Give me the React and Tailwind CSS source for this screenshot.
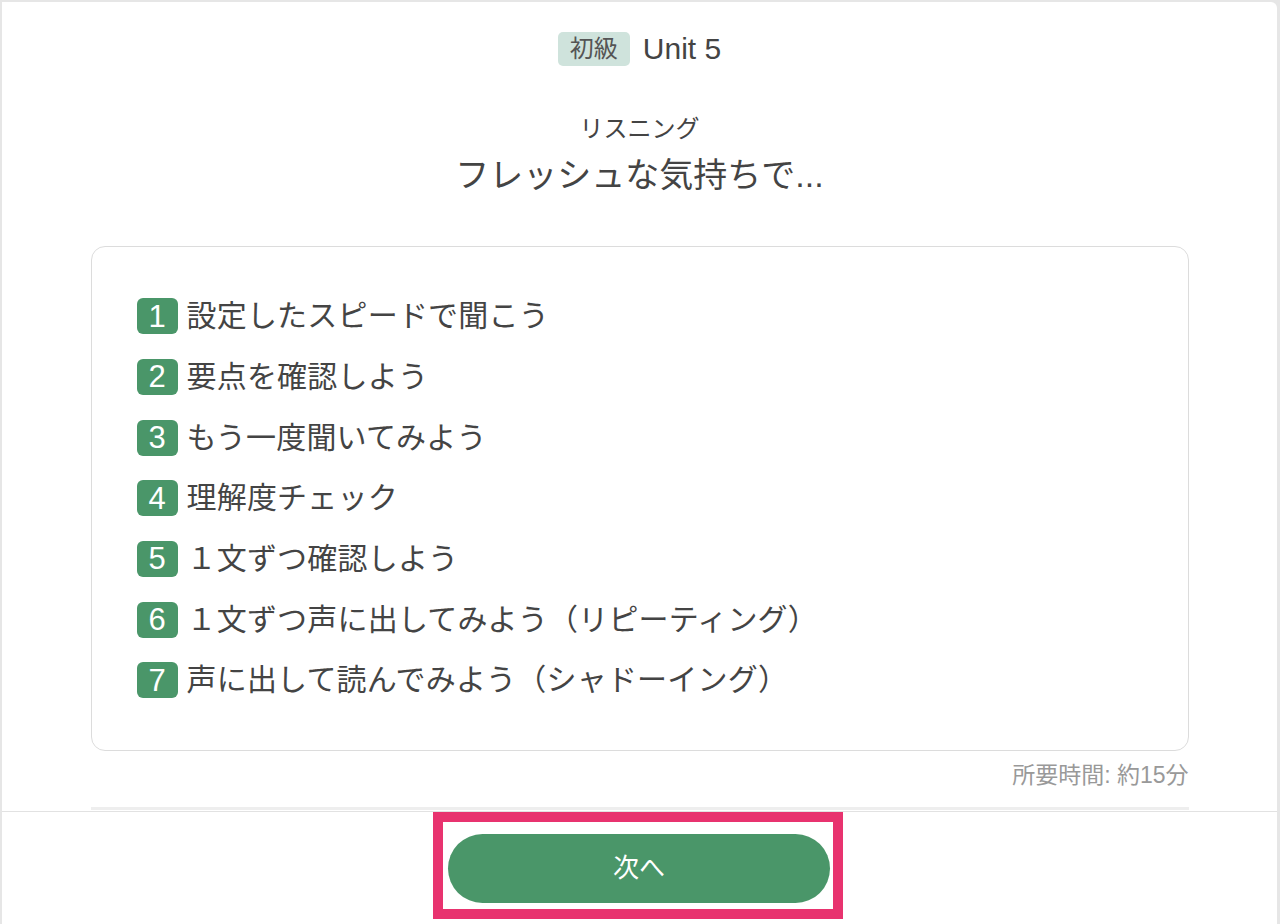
import React from 'react';

const FONT = '"Liberation Sans", "Noto Sans CJK JP", sans-serif';

const steps = [
  '設定したスピードで聞こう',
  '要点を確認しよう',
  'もう一度聞いてみよう',
  '理解度チェック',
  '１文ずつ確認しよう',
  '１文ずつ声に出してみよう（リピーティング）',
  '声に出して読んでみよう（シャドーイング）',
];

const StepRow = ({ num, label }) => (
  <li className="flex items-center h-[60.67px]">
    <span className="w-[41px] h-[36px] rounded-[6px] bg-[#4a9669] text-white text-[31px] flex items-center justify-center leading-none">
      {num}
    </span>
    <span className="ml-[9px] text-[30px] text-[#444] leading-none tracking-[0.2px]">{label}</span>
  </li>
);

export default function App() {
  return (
    <div className="min-h-screen bg-[#e6e6e6] pt-[2px] pl-[2px] pr-[3px]" style={{ fontFamily: FONT }}>
      <div className="bg-white h-[922px] rounded-tr-[6px] flex flex-col">
        {/* scroll area */}
        <div className="h-[809px] overflow-hidden">
          <div className="w-[1098px] mx-auto flex flex-col items-center pt-[30px]">
            <div className="flex items-center gap-[13px]">
              <span className="h-[34px] px-[12px] rounded-[5px] bg-[#cfe3dc] text-[#555] text-[24px] flex items-center leading-none">
                初級
              </span>
              <span className="text-[30px] text-[#444] leading-none">Unit 5</span>
            </div>

            <p className="mt-[48px] text-[24px] leading-[30px] text-[#444]">リスニング</p>
            <h1 className="mt-[9px] text-[34px] leading-[44px] text-[#444]">フレッシュな気持ちで...</h1>

            <div className="mt-[49px] w-full h-[505px] border border-[#dcdcdc] rounded-[14px] pl-[45px] pt-[39px]">
              <ol>
                {steps.map((s, i) => (
                  <StepRow key={i} num={i + 1} label={s} />
                ))}
              </ol>
            </div>

            <p className="self-end mt-[10px] text-[23px] leading-[28px] text-[#999]">所要時間: 約15分</p>
            <div className="mt-[18px] w-full h-[3px] bg-[#eeeeee]" />
          </div>
        </div>

        {/* footer */}
        <div className="flex-1 border-t border-[#e2e2e2] flex justify-center">
          <div className="w-[410px] h-[107px] border-[10px] border-[#e8336f] pt-[12px] pl-[5px] pr-[3px] ml-[-3px]">
            <button className="w-[382px] h-[69px] rounded-full bg-[#4a9669] text-white text-[26px] flex items-center justify-center">
              次へ
            </button>
          </div>
        </div>
      </div>
    </div>
  );
}
